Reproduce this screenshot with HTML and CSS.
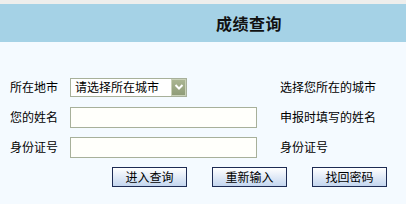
FILE: index.html
```html
<!DOCTYPE html>
<html>
<head>
<meta charset="utf-8">
<link rel="stylesheet" href="styles.css">
</head>
<body>
<div class="topstrip"></div>
<div class="band"><h1 class="title">成绩查询</h1></div>
<form class="form">
  <div class="grid">
    <div class="label">所在地市</div>
    <div class="ctrl">
      <div class="select">
        <span class="select-text">请选择所在城市</span>
        <span class="select-btn">
          <svg width="12" height="14" viewBox="0 0 12 14"><path d="M2.5 5 L6 8.5 L9.5 5" fill="none" stroke="#ffffff" stroke-width="2"/></svg>
        </span>
      </div>
    </div>
    <div class="hint">选择您所在的城市</div>

    <div class="label">您的姓名</div>
    <div class="ctrl"><input class="input" type="text"></div>
    <div class="hint">申报时填写的姓名</div>

    <div class="label">身份证号</div>
    <div class="ctrl"><input class="input" type="text"></div>
    <div class="hint">身份证号</div>
  </div>
  <div class="buttons">
    <button type="button" class="btn">进入查询</button>
    <button type="button" class="btn btn-mid">重新输入</button>
    <button type="button" class="btn btn-last">找回密码</button>
  </div>
</form>
</body>
</html>
```
FILE: styles.css
```css
html, body {
  margin: 0;
  padding: 0;
  background: #f4faff;
  font-family: "Noto Sans CJK SC", "DejaVu Sans", sans-serif;
  font-size: 12px;
  color: #000;
}
.topstrip {
  height: 4px;
  background: #eeeeec;
}
.band {
  height: 38px;
  background: #a5d2e6;
  display: flex;
  align-items: center;
  justify-content: center;
  padding-left: 92px;
}
.title {
  margin: 0;
  font-size: 16px;
  font-weight: bold;
  color: #111;
  letter-spacing: 0.5px;
}
.form {
  margin: 0;
  padding: 30px 0 0 10px;
}
.grid {
  display: grid;
  grid-template-columns: 60px 210px auto;
  grid-auto-rows: 30px;
  align-items: center;
}
.label, .hint {
  line-height: 16px;
}
.ctrl {
  display: flex;
  align-items: center;
}
.select {
  box-sizing: border-box;
  width: 117px;
  height: 19px;
  border: 1px solid #a7b09a;
  background: #ffffff;
  display: flex;
  align-items: center;
  justify-content: space-between;
  padding-left: 4px;
}
.select-text {
  font-size: 12px;
  line-height: 16px;
}
.select-btn {
  box-sizing: border-box;
  width: 15px;
  height: 17px;
  background: linear-gradient(#aab592, #8f9c78);
  border: 1px solid #c9d1b8;
  display: flex;
  align-items: center;
  justify-content: center;
}
.input {
  box-sizing: border-box;
  width: 187px;
  height: 21px;
  margin: 0;
  border: 1px solid #a7b09a;
  background: #fffffb;
  padding: 0 3px;
  font-family: inherit;
  font-size: 12px;
}
.buttons {
  display: flex;
  gap: 25px;
  padding: 5px 0 0 102px;
}
.btn {
  box-sizing: border-box;
  width: 75px;
  height: 20px;
  margin: 0;
  padding: 0;
  border: 1px solid #1d2b53;
  background: linear-gradient(#ffffff, #c4d6ef);
  font-family: inherit;
  font-size: 12px;
  line-height: 16px;
  color: #000;
}
```
